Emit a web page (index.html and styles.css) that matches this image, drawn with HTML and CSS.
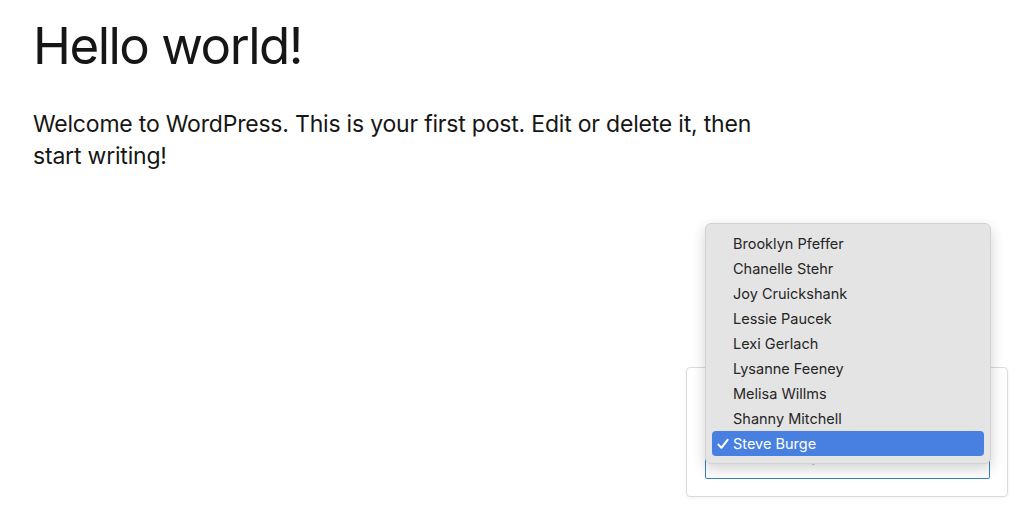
FILE: index.html
```html
<!DOCTYPE html>
<html lang="en">
<head>
<meta charset="utf-8">
<title>Hello world!</title>
<link rel="stylesheet" href="styles.css">
</head>
<body>
<main class="post">
  <h1 class="post-title">Hello world!</h1>
  <p class="post-text">Welcome to WordPress. This is your first post. Edit or delete it, then start writing!</p>
  <div class="widget-row">
    <div class="card">
      <div class="select"><span class="select-value">Steve Burge</span></div>
      <ul class="menu">
        <li class="menu-item">Brooklyn Pfeffer</li>
        <li class="menu-item">Chanelle Stehr</li>
        <li class="menu-item">Joy Cruickshank</li>
        <li class="menu-item">Lessie Paucek</li>
        <li class="menu-item">Lexi Gerlach</li>
        <li class="menu-item">Lysanne Feeney</li>
        <li class="menu-item">Melisa Willms</li>
        <li class="menu-item">Shanny Mitchell</li>
        <li class="menu-item is-selected"><svg class="check" width="12" height="12" viewBox="0 0 12 12" aria-hidden="true"><path d="M1.5 6.6 L4.4 9.8 L10.6 1.8" fill="none" stroke="#fff" stroke-width="2" stroke-linecap="round" stroke-linejoin="round"/></svg>Steve Burge</li>
      </ul>
    </div>
  </div>
</main>
</body>
</html>
```

FILE: styles.css
```css
* { box-sizing: border-box; }
html, body { margin: 0; padding: 0; background: #fff; }
body {
  font-family: Inter, "Noto Sans", sans-serif;
  color: #161616;
  width: 1024px;
  height: 520px;
  overflow: hidden;
}
.post {
  padding: 14px 16px 0 33px;
}
.post-title {
  margin: 0;
  font-size: 51px;
  font-weight: 400;
  letter-spacing: -1.5px;
  line-height: 64px;
}
.post-text {
  margin: 30px 0 0 0;
  width: 740px;
  font-size: 23px;
  line-height: 32px;
  letter-spacing: -0.2px;
}
.widget-row {
  display: flex;
  justify-content: flex-end;
  margin-top: 195px;
}
.card {
  position: relative;
  width: 322px;
  height: 130px;
  border: 1px solid #dcdcdc;
  border-radius: 4px;
  box-shadow: 0 1px 3px rgba(0,0,0,0.06);
  padding: 71px 17px 17px 18px;
}
.select {
  height: 40px;
  border: 1px solid #3a80c6;
  border-radius: 2px;
  font-size: 16px;
  line-height: 30px;
  padding-left: 30px;
  color: #222;
}
.select-value {
  display: inline-block;
}
.menu {
  position: absolute;
  left: 18px;
  top: -145px;
  width: 286px;
  margin: 0;
  padding: 7px 6px;
  list-style: none;
  background: #e4e4e4;
  border: 1px solid #d2d2d2;
  border-radius: 6px;
  box-shadow: 0 5px 14px rgba(0,0,0,0.18);
  font-family: Inter, "Liberation Sans", sans-serif;
  font-size: 14.5px;
  color: #262626;
}
.menu-item {
  height: 25px;
  line-height: 25px;
  padding-left: 21px;
  border-radius: 4px;
  position: relative;
}
.menu-item.is-selected {
  background: #4780e0;
  color: #fff;
}
.check {
  position: absolute;
  left: 5px;
  top: 7px;
}
```
